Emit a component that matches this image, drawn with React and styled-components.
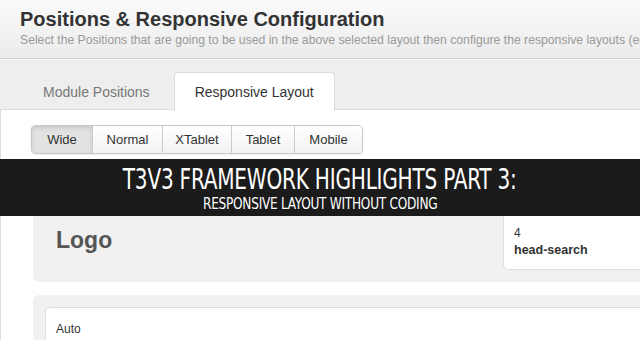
import styled, { createGlobalStyle } from "styled-components";

const Global = createGlobalStyle`
  html, body {
    margin: 0;
    padding: 0;
    background: #fff;
    overflow: hidden;
  }
  body {
    font-family: "Liberation Sans", Arial, sans-serif;
    width: 640px;
    height: 340px;
  }
`;

const Page = styled.div`
  position: relative;
  width: 640px;
  height: 340px;
  overflow: hidden;
`;

const Header = styled.div`
  height: 59px;
  padding: 7px 20px 0;
  box-sizing: border-box;
  background: linear-gradient(#fbfbfb, #ebebeb);
  border-bottom: 1px solid #cfcfcf;
  white-space: nowrap;
  h1 {
    margin: 0;
    font-size: 20px;
    line-height: 24px;
    font-weight: bold;
    color: #333;
  }
  p {
    margin: 2px 0 0;
    font-size: 12.2px;
    line-height: 14px;
    color: #9a9a9a;
  }
`;

const TabBar = styled.div`
  display: flex;
  gap: 3px;
  padding: 12px 0 0 22px;
  height: 51px;
  box-sizing: border-box;
  background: #eee;
  border-top: 1px solid #fafafa;
  border-bottom: 1px solid #ddd;
`;

const Tab = styled.div`
  padding: 0 20px;
  font-size: 14px;
  line-height: 38px;
  color: ${(p) => (p.$active ? "#333" : "#777")};
  background: ${(p) => (p.$active ? "#fff" : "transparent")};
  border: 1px solid ${(p) => (p.$active ? "#ddd" : "transparent")};
  border-bottom: none;
  border-radius: 4px 4px 0 0;
  margin-bottom: -1px;
  height: 39px;
  box-sizing: border-box;
`;

const Content = styled.div`
  border-left: 1px solid #ddd;
  padding: 15px 0 0 32px;
  width: 720px;
  box-sizing: border-box;
`;

const BtnGroup = styled.div`
  display: inline-flex;
  border: 1px solid #c8c8c8;
  border-radius: 4px;
  box-shadow: 0 1px 2px rgba(0, 0, 0, 0.08);
  overflow: hidden;
  margin-left: -2px;
`;

const Btn = styled.div`
  width: ${(p) => p.$w}px;
  box-sizing: border-box;
  text-align: center;
  height: 27px;
  line-height: 27px;
  font-size: 13px;
  color: #333;
  background: ${(p) =>
    p.$active ? "#e2e2e2" : "linear-gradient(#fff, #f2f2f2)"};
  box-shadow: ${(p) =>
    p.$active ? "inset 0 2px 4px rgba(0,0,0,0.12)" : "none"};
  & + & {
    border-left: 1px solid #ccc;
  }
`;

const Panel = styled.div`
  display: flex;
  align-items: flex-end;
  justify-content: space-between;
  background: #f1f1f1;
  border-radius: ${(p) => (p.$top ? "6px 0 0 0" : "0 0 0 6px")};
  margin-top: ${(p) => p.$mt}px;
  padding: 12px 0 12px 12px;
  height: ${(p) => p.$h}px;
  box-sizing: border-box;
`;

const LogoText = styled.div`
  font-size: 23px;
  font-weight: bold;
  color: #555;
  padding: 0 0 17px 11px;
  line-height: 26px;
`;

const Block = styled.div`
  align-self: stretch;
  display: flex;
  flex-direction: column;
  justify-content: ${(p) => (p.$end ? "flex-end" : "flex-start")};
  width: ${(p) => p.$w}px;
  background: #fff;
  border: 1px solid #ddd;
  border-radius: ${(p) => (p.$end ? "0 0 0 5px" : "5px 0 0 0")};
  padding: ${(p) => (p.$end ? "0 10px 10px" : "13px 10px")};
  box-sizing: border-box;
  font-size: 12px;
  line-height: 17px;
  color: #333;
  b {
    font-size: 12.5px;
  }
`;

const Banner = styled.div`
  position: absolute;
  left: 0;
  right: 0;
  top: 159px;
  height: 57px;
  background: #1b1b1b;
  color: #fff;
  display: flex;
  flex-direction: column;
  align-items: center;
  padding-top: 3px;
  box-sizing: border-box;
  font-family: "DejaVu Sans Condensed", "Liberation Sans Narrow", "Liberation Sans", sans-serif;
`;

const BannerLine = styled.div`
  white-space: nowrap;
  font-size: ${(p) => p.$size}px;
  line-height: ${(p) => p.$lh}px;
  transform: scaleX(${(p) => p.$sx});
  letter-spacing: -0.3px;
`;

const buttons = [
  ["Wide", 60, true],
  ["Normal", 70],
  ["XTablet", 69],
  ["Tablet", 63],
  ["Mobile", 68],
];

export default function App() {
  return (
    <Page>
      <Global />
      <Header>
        <h1>Positions &amp; Responsive Configuration</h1>
        <p>
          Select the Positions that are going to be used in the above selected
          layout then configure the responsive layouts (eg: Wide, Normal)
        </p>
      </Header>
      <TabBar>
        <Tab>Module Positions</Tab>
        <Tab $active>Responsive Layout</Tab>
      </TabBar>
      <Content>
        <BtnGroup>
          {buttons.map(([label, w, active]) => (
            <Btn key={label} $w={w} $active={active}>
              {label}
            </Btn>
          ))}
        </BtnGroup>
        <Panel $mt={15} $h={113}>
          <LogoText>Logo</LogoText>
          <Block $end $w={217}>
            <span>4</span>
            <b>head-search</b>
          </Block>
        </Panel>
        <Panel $top $mt={13} $h={80}>
          <Block $w={700}>Auto</Block>
        </Panel>
      </Content>
      <Banner>
        <BannerLine $size={29} $lh={34} $sx={0.77}>
          T3V3 FRAMEWORK HIGHLIGHTS PART 3:
        </BannerLine>
        <BannerLine $size={15} $lh={16} $sx={0.9}>
          RESPONSIVE LAYOUT WITHOUT CODING
        </BannerLine>
      </Banner>
    </Page>
  );
}
